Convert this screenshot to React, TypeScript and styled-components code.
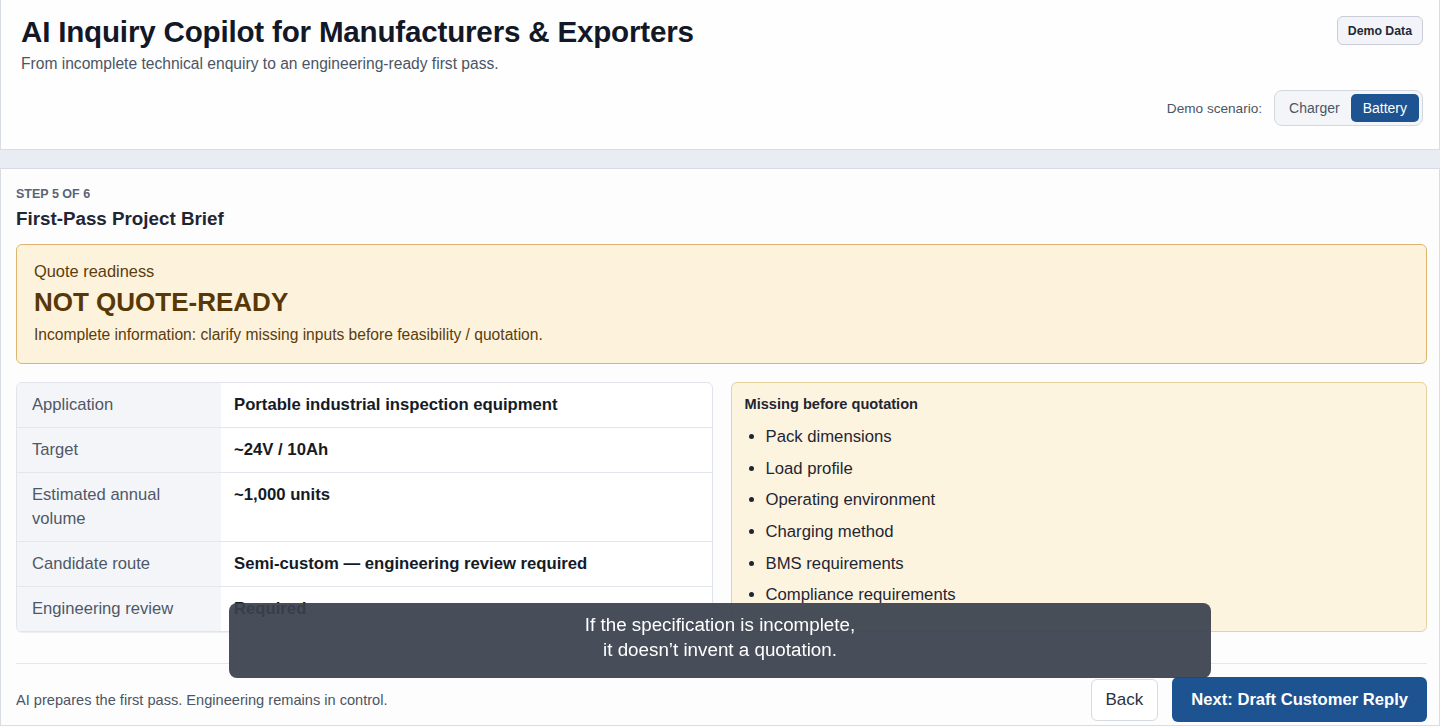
import styled, { createGlobalStyle } from "styled-components"

const GlobalStyle = createGlobalStyle`
  html, body {
    margin: 0;
    padding: 0;
    background: #e9edf3;
    font-family: "Liberation Sans", Arial, sans-serif;
    color: #111827;
  }
  * {
    box-sizing: border-box;
  }
`

const Page = styled.div`
  display: flex;
  flex-direction: column;
  gap: 18px;
  min-height: 726px;
  overflow: hidden;
`

const HeaderCard = styled.header`
  display: flex;
  justify-content: space-between;
  height: 150px;
  padding: 15px 16px 23px 20px;
  background: #fefeff;
  border: 1px solid #d8dde5;
  border-top: none;
`

const TitleBlock = styled.div`
  display: flex;
  flex-direction: column;
  gap: 5px;
`

const AppTitle = styled.h1`
  margin: 0;
  font-size: 29.6px;
  line-height: 34px;
  font-weight: 700;
  color: #121826;
  letter-spacing: -0.2px;
`

const Subtitle = styled.p`
  margin: 0;
  font-size: 15.6px;
  line-height: 20px;
  color: #4b5563;
`

const HeaderSide = styled.div`
  display: flex;
  flex-direction: column;
  align-items: flex-end;
  justify-content: space-between;
  padding-top: 1px;
`

const DemoBadge = styled.button`
  height: 29px;
  padding: 0 10px;
  font-family: inherit;
  font-size: 12.3px;
  font-weight: 700;
  color: #1f2937;
  background: #f3f4f9;
  border: 1px solid #c8ccd6;
  border-radius: 6px;
`

const ScenarioRow = styled.div`
  display: flex;
  align-items: center;
  gap: 12px;
`

const ScenarioLabel = styled.span`
  font-size: 13.6px;
  color: #4b5563;
`

const Segmented = styled.div`
  display: flex;
  padding: 3px;
  background: #f3f5f9;
  border: 1px solid #d3d8e0;
  border-radius: 8px;
`

const Segment = styled.button<{ $active?: boolean }>`
  height: 28px;
  padding: 0 ${p => (p.$active ? 12 : 11)}px;
  font-family: inherit;
  font-size: 14px;
  border: none;
  border-radius: 5px;
  color: ${p => (p.$active ? "#ffffff" : "#4b5563")};
  background: ${p => (p.$active ? "#1d5390" : "transparent")};
`

const MainCard = styled.main`
  flex: 1;
  display: flex;
  flex-direction: column;
  padding: 18px 12px 0 15px;
  background: #fdfdfe;
  border: 1px solid #d8dde5;
`

const StepLabel = styled.div`
  font-size: 12.5px;
  line-height: 15px;
  font-weight: 700;
  color: #5b6474;
  text-transform: uppercase;
`

const StepTitle = styled.h2`
  margin: 6px 0 14px;
  font-size: 18.8px;
  line-height: 22px;
  font-weight: 700;
  color: #1f2633;
`

const ReadinessBox = styled.section`
  height: 120px;
  padding: 15px 17px 0;
  background: #fdf3dc;
  border: 1px solid #ddb56e;
  border-radius: 6px;
  color: #5b3c0e;
`

const ReadinessLabel = styled.div`
  font-size: 16.4px;
  line-height: 22px;
`

const ReadinessState = styled.div`
  margin-top: 5px;
  font-size: 26px;
  line-height: 30px;
  font-weight: 700;
  color: #583806;
`

const ReadinessNote = styled.div`
  margin-top: 9px;
  font-size: 15.6px;
  line-height: 18px;
`

const BriefGrid = styled.div`
  display: grid;
  grid-template-columns: 1fr 1fr;
  gap: 18px;
  margin-top: 18px;
  height: 250px;
`

const FactTable = styled.div`
  display: grid;
  grid-template-columns: 204px 1fr;
  align-content: start;
  border: 1px solid #e1e5eb;
  border-radius: 6px;
  overflow: hidden;
  background: #ffffff;
  box-shadow: 0 1px 1px rgba(15, 23, 42, 0.06);
`

const FactLabel = styled.div<{ $last?: boolean }>`
  padding: 10px 15px;
  font-size: 16.6px;
  line-height: 24px;
  color: #4f5866;
  background: #f3f5f9;
  border-bottom: ${p => (p.$last ? "none" : "1px solid #e3e7ed")};
`

const FactValue = styled.div<{ $last?: boolean }>`
  padding: 10px 13px;
  font-size: 16.7px;
  line-height: 24px;
  font-weight: 700;
  color: #151b26;
  border-bottom: ${p => (p.$last ? "none" : "1px solid #e3e7ed")};
`

const MissingBox = styled.section`
  padding: 12px 13px;
  background: #fdf4df;
  border: 1px solid #e6d29f;
  border-radius: 6px;
`

const MissingTitle = styled.div`
  font-size: 14.6px;
  line-height: 18px;
  font-weight: 700;
  color: #1f2633;
`

const MissingList = styled.ul`
  display: flex;
  flex-direction: column;
  gap: 7.7px;
  margin: 12px 0 0;
  padding-left: 21px;
`

const MissingItem = styled.li`
  font-size: 16.7px;
  line-height: 24px;
  color: #1f2633;
`

const Divider = styled.hr`
  margin: 31px 0 0;
  border: none;
  border-top: 1px solid #e3e6eb;
`

const Footer = styled.footer`
  display: flex;
  align-items: center;
  gap: 14px;
  padding-top: 13px;
`

const FooterNote = styled.span`
  flex: 1;
  font-size: 14.6px;
  color: #4b5563;
`

const BackButton = styled.button`
  height: 42px;
  padding: 0 14px;
  font-family: inherit;
  font-size: 17px;
  color: #2a3240;
  background: #ffffff;
  border: 1px solid #d6dae1;
  border-radius: 6px;
`

const NextButton = styled.button`
  height: 45px;
  padding: 0 19px;
  font-family: inherit;
  font-size: 16.6px;
  font-weight: 700;
  color: #ffffff;
  background: #1d5390;
  border: none;
  border-radius: 6px;
`

// subtitle strip laid over the page
const Caption = styled.div`
  position: fixed;
  left: 229px;
  bottom: 48px;
  width: 982px;
  height: 75px;
  padding-top: 9px;
  display: flex;
  flex-direction: column;
  align-items: center;
  background: rgba(58, 65, 76, 0.93);
  border-radius: 8px;
  color: #ffffff;
  font-size: 18.8px;
  line-height: 25px;
  text-align: center;
`

const facts = [
  { label: "Application", value: "Portable industrial inspection equipment" },
  { label: "Target", value: "~24V / 10Ah" },
  { label: "Estimated annual volume", value: "~1,000 units" },
  { label: "Candidate route", value: "Semi-custom — engineering review required" },
  { label: "Engineering review", value: "Required" }
]

const missing = [
  "Pack dimensions",
  "Load profile",
  "Operating environment",
  "Charging method",
  "BMS requirements",
  "Compliance requirements"
]

export default function App() {
  return (
    <>
      <GlobalStyle />
      <Page>
        <HeaderCard>
          <TitleBlock>
            <AppTitle>AI Inquiry Copilot for Manufacturers &amp; Exporters</AppTitle>
            <Subtitle>
              From incomplete technical enquiry to an engineering-ready first pass.
            </Subtitle>
          </TitleBlock>
          <HeaderSide>
            <DemoBadge>Demo Data</DemoBadge>
            <ScenarioRow>
              <ScenarioLabel>Demo scenario:</ScenarioLabel>
              <Segmented>
                <Segment>Charger</Segment>
                <Segment $active>Battery</Segment>
              </Segmented>
            </ScenarioRow>
          </HeaderSide>
        </HeaderCard>

        <MainCard>
          <StepLabel>Step 5 of 6</StepLabel>
          <StepTitle>First-Pass Project Brief</StepTitle>

          <ReadinessBox>
            <ReadinessLabel>Quote readiness</ReadinessLabel>
            <ReadinessState>NOT QUOTE-READY</ReadinessState>
            <ReadinessNote>
              Incomplete information: clarify missing inputs before feasibility / quotation.
            </ReadinessNote>
          </ReadinessBox>

          <BriefGrid>
            <FactTable>
              {facts.map((f, i) => {
                const last = i === facts.length - 1
                return [
                  <FactLabel key={`l${i}`} $last={last}>
                    {f.label}
                  </FactLabel>,
                  <FactValue key={`v${i}`} $last={last}>
                    {f.value}
                  </FactValue>
                ]
              })}
            </FactTable>
            <MissingBox>
              <MissingTitle>Missing before quotation</MissingTitle>
              <MissingList>
                {missing.map(m => (
                  <MissingItem key={m}>{m}</MissingItem>
                ))}
              </MissingList>
            </MissingBox>
          </BriefGrid>

          <Divider />
          <Footer>
            <FooterNote>AI prepares the first pass. Engineering remains in control.</FooterNote>
            <BackButton>Back</BackButton>
            <NextButton>Next: Draft Customer Reply</NextButton>
          </Footer>
        </MainCard>
      </Page>

      <Caption>
        <div>If the specification is incomplete,</div>
        <div>it doesn’t invent a quotation.</div>
      </Caption>
    </>
  )
}
